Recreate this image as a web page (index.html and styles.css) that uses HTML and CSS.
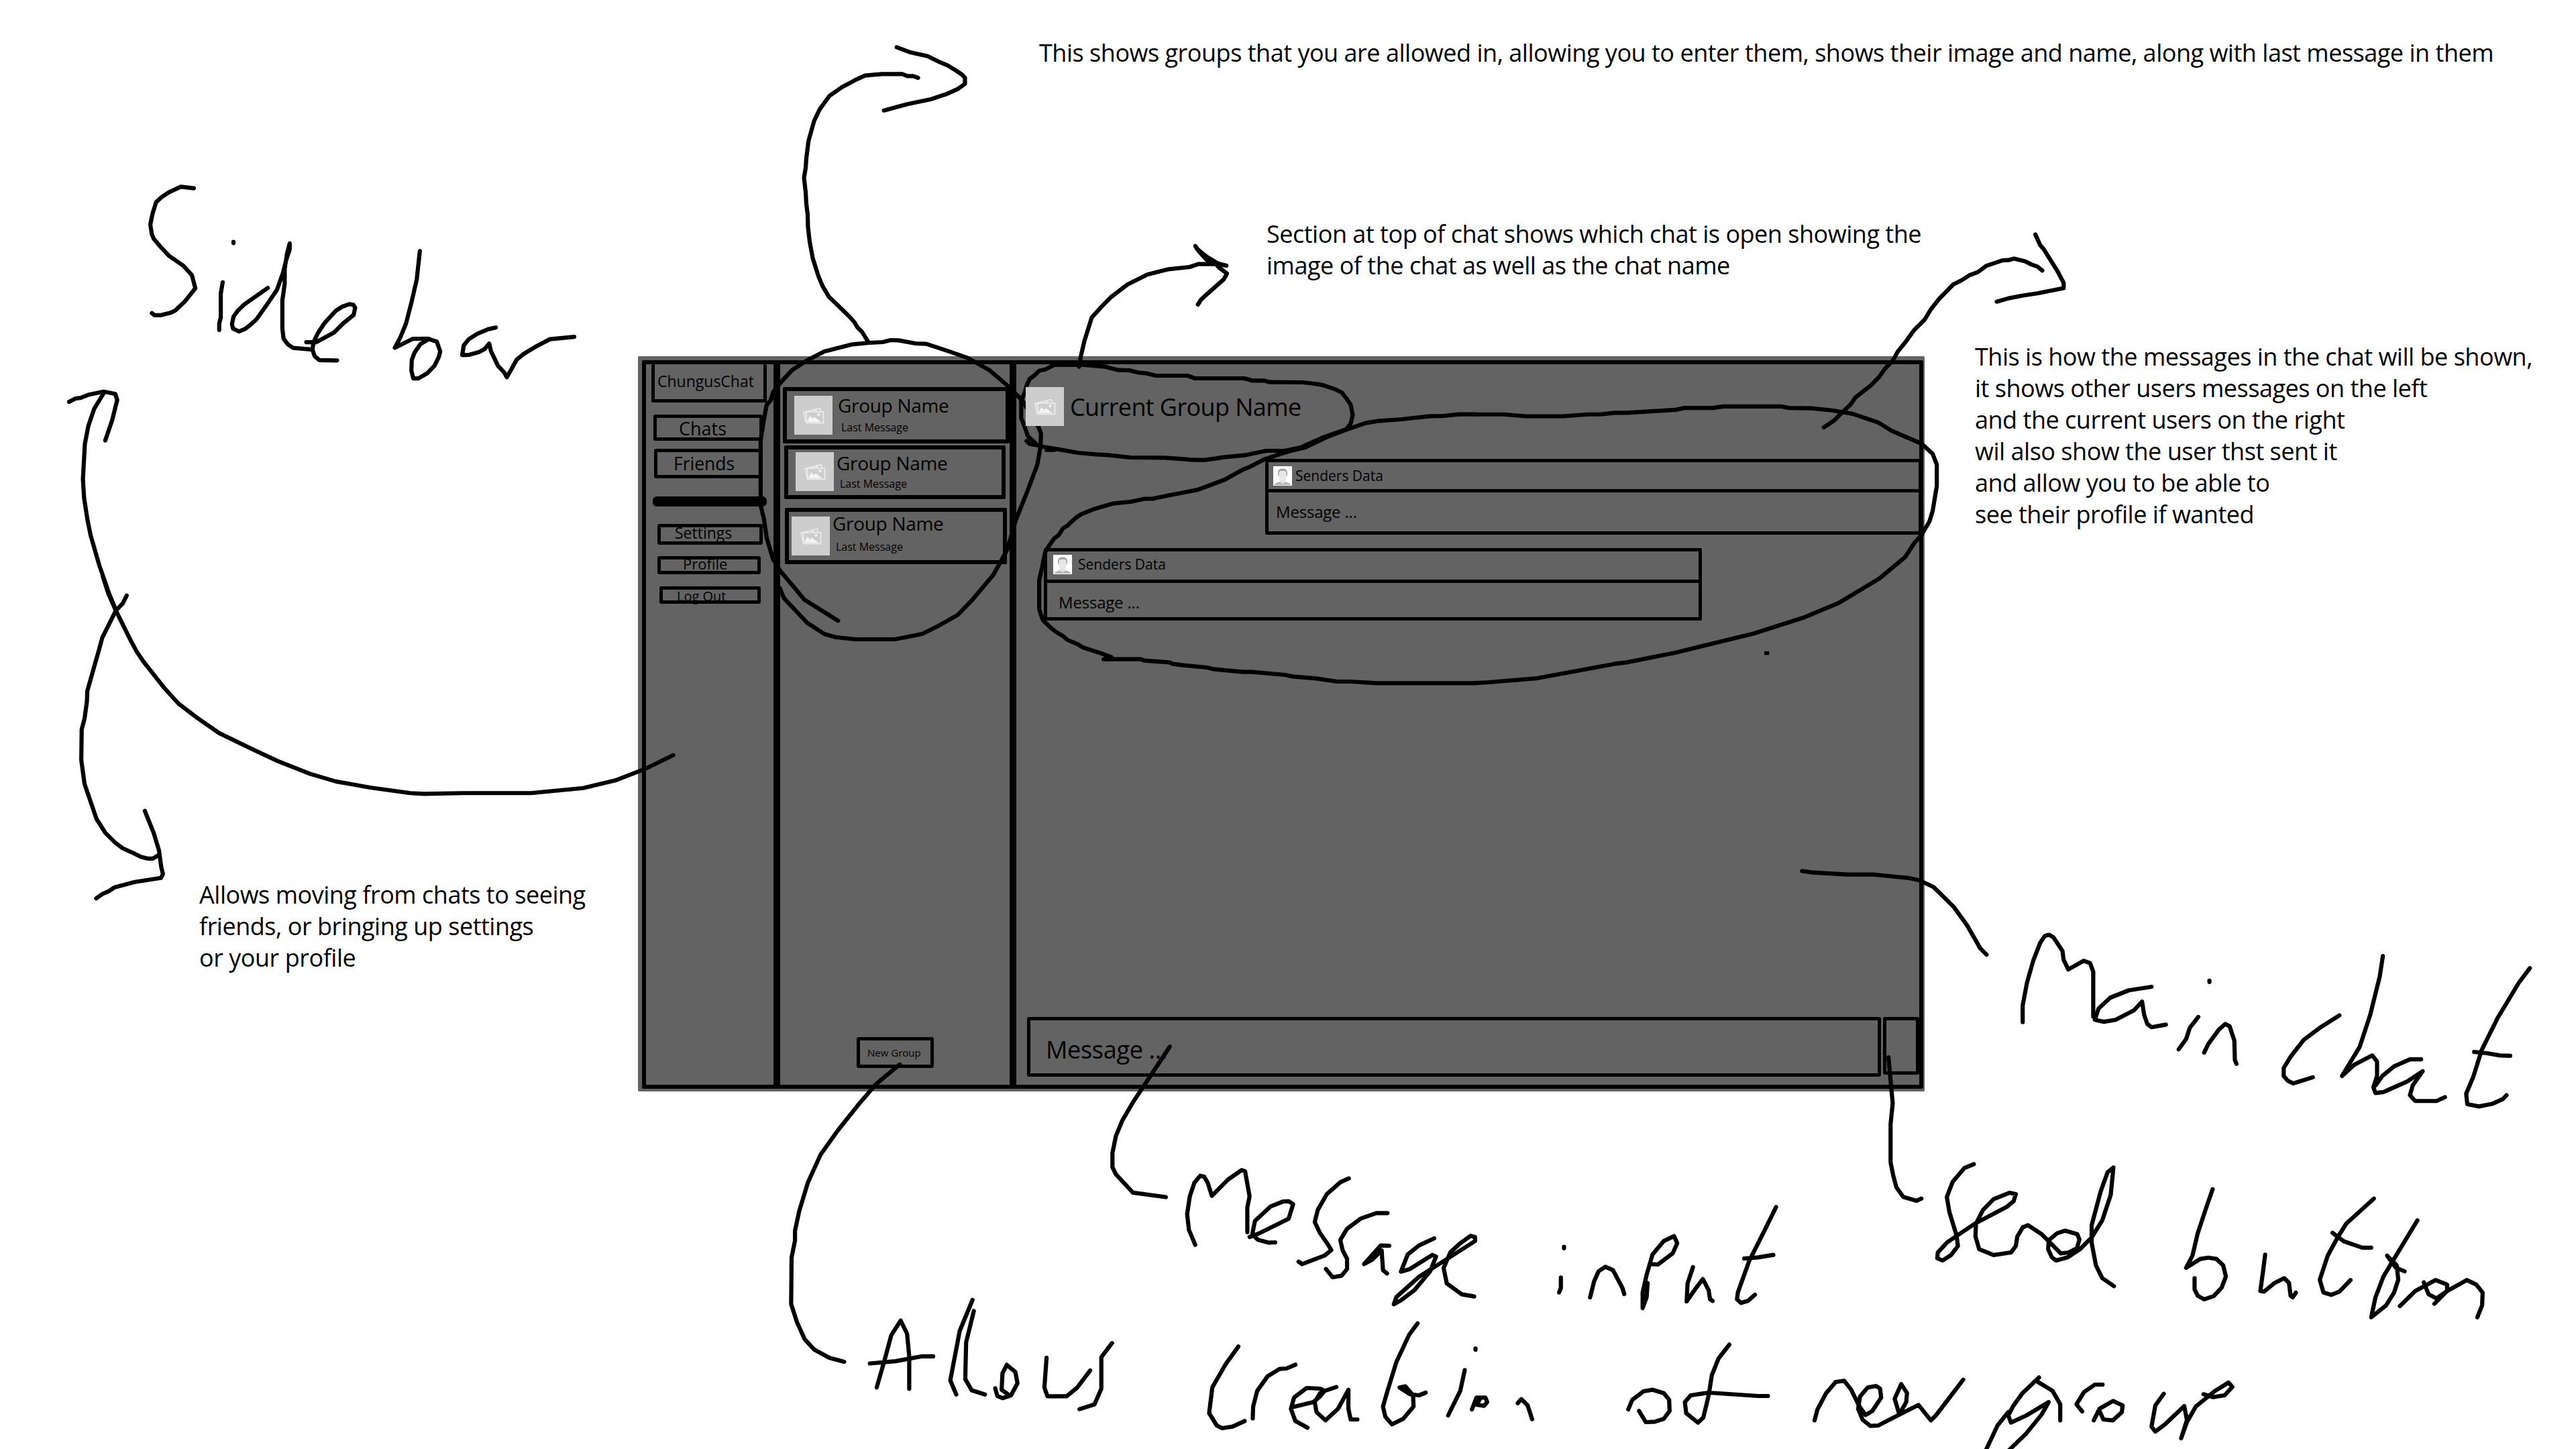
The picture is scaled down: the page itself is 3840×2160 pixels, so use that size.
FILE: index.html
```html
<!DOCTYPE html>
<html lang="en">
<head>
<meta charset="utf-8">
<title>ChungusChat wireframe</title>
<link rel="stylesheet" href="styles.css">
</head>
<body>
<svg class="defs" aria-hidden="true">
  <symbol id="photo" viewBox="0 0 57 58">
    <rect width="57" height="58" fill="#cdcdcd"/>
    <path d="M17.5 39.5 13.8 24.8 38 18.3 39.5 23M17 23.5l2 16" fill="none" stroke="#f0f0f0" stroke-width="1.4"/>
    <rect x="18" y="24" width="25.500" height="16.500" fill="#cdcdcd" stroke="#f0f0f0" stroke-width="1.500"/>
    <path d="M19.500 39v-2l4-7 4 4 2.500-2.500L40 39zM29 22.500l3.500-2.300 2 2.300z" fill="#f4f4f4"/>
    <circle cx="36.500" cy="28" r="2" fill="#f4f4f4"/>
  </symbol>
  <symbol id="person" viewBox="0 0 28 29">
    <rect width="28" height="29" fill="#fff"/>
    <path d="M1.500 28c1-3 5-3.500 8.500-5h8c3.500 1.500 7.500 2 8.500 5z" fill="#b5b5b5"/>
    <path d="M10 19h8v4.500q-4 5-8 0z" fill="#dedede"/>
    <path d="M7.200 14C6 7 8 3.500 14 3.500S21.800 7 20.800 14z" fill="#a2a2a2"/>
    <path d="M8.300 12q0-4 2-4.800 3.700-1 7.400 0 2 .8 2 4.800c0 6-2.200 11-5.700 11s-5.700-5-5.700-11z" fill="#e7e7e7"/>
  </symbol>
</svg>

<main class="board">
  <p class="note note-groups">This shows groups that you are allowed in, allowing you to enter them, shows their image and name, along with last message in them</p>
  <p class="note note-header">Section at top of chat shows which chat is open showing the<br>image of the chat as well as the chat name</p>
  <p class="note note-messages">This is how the messages in the chat will be shown,<br>it shows other users messages on the left<br>and the current users on the right<br>wil also show the user thst sent it<br>and allow you to be able to<br>see their profile if wanted</p>
  <p class="note note-sidebar">Allows moving from chats to seeing<br>friends, or bringing up settings<br>or your profile</p>

  <div class="window">
    <div class="app">
      <nav class="sidebar">
        <div class="box brand"><span>ChungusChat</span></div>
        <div class="box chats"><span>Chats</span></div>
        <div class="box friends"><span>Friends</span></div>
        <div class="rule"></div>
        <div class="box settings"><span>Settings</span></div>
        <div class="box profile"><span>Profile</span></div>
        <div class="box logout"><span>Log Out</span></div>
      </nav>
      <section class="groups">
        <article class="card card-a"><svg class="photo"><use href="#photo"/></svg><div class="info"><h3>Group Name</h3><p>Last Message</p></div></article>
        <article class="card card-b"><svg class="photo"><use href="#photo"/></svg><div class="info"><h3>Group Name</h3><p>Last Message</p></div></article>
        <article class="card card-c"><svg class="photo"><use href="#photo"/></svg><div class="info"><h3>Group Name</h3><p>Last Message</p></div></article>
        <div class="box new-group"><span>New Group</span></div>
      </section>
      <section class="chat">
        <header class="current"><svg class="photo"><use href="#photo"/></svg><h2>Current Group Name</h2></header>
        <article class="message mine">
          <div class="sender"><svg class="avatar"><use href="#person"/></svg><span>Senders Data</span></div>
          <p>Message ...</p>
        </article>
        <article class="message theirs">
          <div class="sender"><svg class="avatar"><use href="#person"/></svg><span>Senders Data</span></div>
          <p>Message ...</p>
        </article>
        <footer class="composer">
          <div class="box input"><span>Message ...</span></div>
          <div class="box send"></div>
        </footer>
      </section>
    </div>
  </div>

  <svg class="ink" viewBox="0 0 3840 2160">
    <g transform="translate(80 240) scale(.57398 .44643)">
      <path d="M364 91 330 86 300 104 280 121 266 138 257 175 251 212 255 245 260 260 280 290 300 317 337 350 359 381 368 425 340 470 316 499 305 506 277 515 262 515 255 508"/>
      <path d="M439 405 434 443 434 522 430 543 430 564M467 270v4"/>
      <path d="M556 424 494 480 478 500 467 520 463 545 466 560 481 569 497 561 513 545 527 528 553 481 580 430 596 372 604 330 613 295 613 275 606 310 600 360 600 410 594 465 594 560 597 593 608 612 622 624 668 629"/>
      <path d="M656 605 682 605 728 573 752 542 779 514 783 490 778 480 768 478 750 486 733 500 703 542 686 575 675 605 672 630 678 652 690 665 736 666"/>
      <path d="M951 301 943 395 930 468 915 543 900 590 886 624 932 594 970 593 995 603 1004 636 1000 655 989 684 970 709 947 726 934 726 929 700 930 665 937 640 952 612 975 594"/>
      <path d="M1148 556 1128 562 1100 577 1078 595 1065 616 1061 648 1080 647 1105 638 1119 628 1131 610 1136 636 1154 684 1170 706 1177 722 1188 697 1202 664 1221 644 1256 617 1289 595 1352 587"/>
      <path d="M40 804 57 793 70 791 92 780 130 770 160 778 165 798 152 865 134 933M130 775 105 828 90 885 81 945 76 1062 79 1125 88 1200 96 1250 119 1352 145 1448 162 1500"/>
    </g>
    <g transform="translate(90 860) scale(.59949 .39541)">
      <path d="M106 0 119 62 138 127 175 240 190 282 206 318 258 418 294 478 340 531 395 589 478 650 540 694 620 742 685 771 770 794 870 815 905 818 1000 815 1170 815 1300 796 1380 767 1452 725 1524 672"/>
      <path d="M165 70 155 100 138 127 104 230 96 275 80 360 67 430 66 470 60 535 53 575 52 690 60 780 90 913 112 965 135 1000 155 1023 180 1040 200 1055 218 1062 230 1062 243 1050"/>
      <path d="M210 882 232 965 245 1030 251 1095 255 1120 250 1135 185 1150 135 1170 120 1185 105 1195 89 1212"/>
    </g>
    <g transform="translate(1180 50) scale(.42092 .33333)">
      <path d="M448 198 430 190 410 190 392 181 320 181 260 188 230 205 178 240 134 279 100 338 80 390 60 480 52 560 50 600 44 645 50 710 52 760 57 810 58 865 64 930 75 1005 95 1085 110 1130 132 1177 200 1260 222 1290 232 1312 250 1335 262 1360 272 1380"/>
      <path d="M372 61 418 83 482 101 525 128 552 142 583 166 605 185 614 198 614 225 590 247 550 270 490 295 410 316 327 344"/>
      <path d="M1018 1490 1025 1440 1037 1375 1063 1270 1095 1225 1130 1180 1190 1122 1260 1078 1335 1054 1410 1044 1440 1031 1500 1031 1540 1038 1510 1028 1470 998 1435 962"/>
      <path d="M1430 950 1445 978 1470 1012 1500 1028 1515 1048 1542 1073 1530 1100 1460 1178 1450 1190 1439 1212"/>
    </g>
    <g transform="translate(940 500) scale(.40816 .33333)">
      <path d="M758 1276 635 1182 600 1130 548 1055 520 1000 497 905 487 820 475 760 475 470 485 390 497 310 512 290 520 255 545 215 590 155 640 115 707 72 810 40 870 33 920 30 950 21 980 22 1040 36 1080 38 1160 70 1230 100 1310 155 1380 228 1430 290 1490 410 1499 440 1497 500 1485 580 1445 710 1407 825 1375 960 1325 1070 1250 1180 1195 1250 1130 1295 1065 1335 965 1359 820 1359 750 1350 707 1335 645 1285 560 1175 545 1130"/>
    </g>
    <g transform="translate(1500 520) scale(.44643 .33333)">
      <path d="M68 412 78 425 100 430 130 440 185 452 240 465 300 472 340 475 415 486 530 487 630 497 665 497 730 484 800 475 868 456 930 456 985 440 1060 395 1135 360 1150 335 1157 295 1150 250 1135 220 1120 195 1100 182 1060 163 1030 156 990 150 880 149 860 142 820 142 795 132 630 132 605 120 500 120 470 110 440 106 410 96 375 95 330 80 260 72 160 72 130 92 110 98 95 118 78 135 68 165 62 195 50 230 50 310 62 350 72 390 100 425M135 452H160"/>
      <path d="M1568 1495H1235L1150 1488 1105 1488 1035 1474 960 1466 930 1458 820 1445 790 1445 690 1432 670 1425 590 1415 555 1409 545 1402 460 1394 450 1388 325 1388 352 1380 320 1363 255 1335 240 1322 205 1302 190 1285 165 1265 145 1243 122 1213 110 1165 110 1035 120 975 130 910 138 890 160 848 175 833 190 802 205 790 230 758 250 740 290 718 330 702 360 691 415 684 460 671 490 670 545 655 640 630 730 585 790 540 810 530 860 495 905 475 940 460 1000 440 1070 395 1135 362 1200 332 1240 323 1320 315 1415 301 1460 300 1510 293 1568 293"/>
    </g>
    <g transform="translate(2180 300) scale(.61224 .45918)">
      <path d="M33 692 100 692 155 698 245 698 305 692 335 692 370 687 400 687 520 677 540 671 610 671 635 666 775 666 795 671 850 672 900 679 950 690 1012 718 1045 745 1118 787 1145 820 1155 855 1155 925 1145 1005 1137 1040 1118 1083 1100 1110 1078 1155 1015 1225 915 1305 830 1352 710 1403 520 1465 400 1497 370 1502 180 1549 60 1562 33 1564"/>
      <path d="M880 734 905 712 925 685 945 660 957 637 995 597 1015 570 1028 545 1048 517 1060 488 1080 455 1100 418 1125 385 1140 352 1160 318 1195 270 1215 257 1235 240 1255 230 1275 210 1315 192 1330 191 1343 186 1370 195 1385 205 1400 212 1412 225"/>
      <path d="M1395 108 1407 143 1415 155 1448 225 1464 265 1464 282 1400 299 1365 306 1330 315 1301 326"/>
      <path d="M735 1461h12v12h-12z" class="speck"/>
    </g>
    <g transform="translate(2600 1250) scale(.79082 .47832)">
      <path d="M109 101 130 106 195 112 243 112 310 123 330 130 357 151 395 213 420 270 445 342 457 362"/>
      <path d="M525 572 525 520 533 450 545 380 558 325 567 303 575 300 583 308 600 350 602 377 611 408 640 381 652 388 658 415 658 555"/>
      <path d="M768 462 725 473 690 496 668 530 661 565 678 571 700 565 735 535 750 508 754 550 760 578 768 588 795 580"/>
      <path d="M856 556 840 590 833 625 819 657M877 443v4M867 667 875 640 895 595 907 578 915 585 924 630 925 690 928 702"/>
      <path d="M1122 551 1085 590 1055 627 1030 680 1017 715 1017 740 1025 755 1035 763 1072 744"/>
      <path d="M1204 366 1198 430 1180 550 1160 650 1127 740 1150 705 1184 676 1193 695 1193 740 1186 775 1190 793 1205 790 1250 757 1279 725 1260 770 1255 800 1265 818 1305 818 1321 806M1276 688 1255 688 1225 710 1203 740 1190 770"/>
      <path d="M1481 404 1460 450 1420 560 1390 660 1375 740 1361 795 1363 828 1385 835 1410 827 1430 812 1437 800M1376 665 1400 669 1425 676 1444 677"/>
      <path d="M272 682 276 755 280 825 276 890 276 1010 281 1050 287 1087 300 1117 325 1129 334 1122"/>
      <path d="M433 1015 415 1027 393 1070 382 1117 387 1165 400 1235 403 1270 390 1298 374 1315 364 1308 365 1290 383 1258 435 1200 495 1148 508 1130 512 1108 500 1104 470 1124 450 1158 437 1200 436 1240 443 1280 470 1298 503 1290 512 1270 515 1240 525 1212 535 1205 560 1232 597 1293 612 1290 627 1277 632 1250 628 1233 605 1222 590 1230 574 1252 573 1280 580 1305 588 1315 610 1305 633 1280 655 1243 675 1190 691 1110 696 1025 685 1040 672 1100 655 1205 655 1260 663 1330 675 1370 697 1395"/>
      <path d="M883 1093 870 1155 855 1230 845 1300 833 1338 860 1310 875 1306 890 1310 903 1330 908 1365 900 1400 885 1426 867 1436 855 1425 849 1405 849 1370"/>
      <path d="M982 1297 978 1350 973 1410 980 1412 1000 1385 1018 1370 1027 1385 1030 1425 1034 1430 1040 1415"/>
      <path d="M1187 1122 1135 1200 1118 1245 1100 1300 1085 1375 1092 1415 1107 1422 1122 1412 1143 1376M1109 1229 1130 1255 1165 1275 1182 1275"/>
      <path d="M1269 1190 1225 1310 1205 1365 1190 1430 1182 1492 1210 1455 1225 1415 1233 1375 1230 1330 1212 1300 1228 1337 1245 1349"/>
      <path d="M1236 1457 1265 1410 1303 1376 1325 1390 1325 1410 1305 1433 1290 1420 1281 1383M1301 1450 1325 1410 1362 1376 1380 1390 1392 1415 1391 1455 1382 1492"/>
    </g>
    <g transform="translate(1700 1720) scale(.66964 .33333)">
      <path d="M122 407 108 340 104 270 110 190 120 130 133 98 142 102 150 130 159 188 195 115 225 73 233 78 243 190 238 240 238 350"/>
      <path d="M243 372 265 355 330 290 340 225 330 212 318 213 290 235 255 300 249 360 262 385 285 397 300 396"/>
      <path d="M464 110 445 127 415 180 395 250 388 305 400 355 415 398 425 430 410 455 360 493 352 482"/>
      <path d="M550 265 525 265 490 290 460 335 445 385 450 430 460 470 460 515 448 545 428 552 413 515"/>
      <path d="M554 411 535 410 498 493 515 475 537 432 540 520 549 535"/>
      <path d="M654 378 620 410 595 450 580 527 600 515 650 452 658 460 645 525 610 610 580 655 564 673 570 640 620 550 745 390 745 372 735 367 712 400 690 440 675 510 682 580 715 628 743 638"/>
      <path d="M936 553 936 600 932 620M943 416v6M1001 642 1010 570 1020 525 1035 505 1052 520 1073 600 1077 627"/>
      <path d="M1129 578 1127 640 1118 690 1118 620 1127 540 1140 450 1165 390 1188 368 1195 400 1185 445 1152 495 1138 493"/>
      <path d="M1230 507 1218 580 1216 660 1235 605 1252 560 1265 610 1268 650 1274 658"/>
      <path d="M1415 238 1390 340 1355 480 1330 620 1328 650 1337 667 1352 658 1368 630M1344 468 1375 463 1409 452"/>
      <path d="M218 862 190 940 160 1045 153 1160 170 1215 182 1227 205 1220 232 1195"/>
      <path d="M250 1183 251 1130 260 1060 283 995 310 962 325 960 345 943"/>
      <path d="M338 1133 385 1110 400 1085 410 1060 436 1043M372 1225 345 1195 335 1140 342 1090 370 1047 400 1050 410 1060M400 1070 388 1110 392 1155 412 1192 440 1140 463 1055 463 1140 468 1188 483 1188"/>
      <path d="M617 758 598 810 570 930 550 1060 540 1130 545 1175 560 1210 585 1185 608 1130 607 1080 590 1040 577 1045 600 1075 620 1080 635 1068"/>
      <path d="M722 967 712 1060 685 1170M746 870v6M738 1143 748 1090 768 1090 772 1110 765 1127 748 1122 755 1100M840 1115 848 1097 862 1125 872 1187"/>
      <path d="M1086 1143 1095 1100 1120 1062 1140 1055 1165 1070 1177 1100 1178 1150 1165 1185 1145 1198 1125 1200 1110 1150"/>
      <path d="M1311 853 1287 915 1272 990 1265 1080 1253 1180 1241 1202 1215 1160 1212 1110 1225 1080 1265 1068 1375 1083 1397 1083"/>
    </g>
    <g transform="translate(1150 1500) scale(.63776 .42092)">
      <path d="M300 206 245 275 205 345 155 440 115 525 85 625 65 725 55 795 55 830 47 890 46 1055 60 1120 78 1180 100 1216 135 1245 170 1259"/>
      <path d="M931 143 880 260 845 340 820 405 805 460 797 520 797 570 805 595 845 660 922 676"/>
      <path d="M246 1350 265 1250 280 1165 302 1113 317 1160 322 1240 322 1355M230 1265 290 1257 350 1240 378 1240"/>
      <path d="M470 1040 440 1150 418 1325 432 1375M473 1079 455 1190 453 1320 468 1360 499 1375"/>
      <path d="M523 1353 528 1380 540 1388 560 1378 575 1335 570 1295 550 1270 540 1300 538 1358 552 1373"/>
      <path d="M643 1245 638 1350 645 1381 690 1381 715 1350 745 1290M796 1193 771 1243 771 1355 755 1410 720 1427"/>
    </g>
    <g transform="translate(2550 1980) scale(.57398 .33333)">
      <path d="M270 412 277 365 300 290 325 240 347 235 365 275 385 345 402 388 420 370 443 310 440 270 430 258 408 265 388 305 383 360 395 410 415 437 435 435 480 395 540 343 572 412 585 390 625 300 656 230M490 385 478 315 495 250 510 290 508 330 490 385"/>
      <path d="M853 220 810 290 785 350 773 390 780 422 820 390 878 330 860 385 820 470 775 545M773 375 745 435 715 545M850 240 888 280 908 340 908 412"/>
      <path d="M1018 252 998 252 970 285 950 340 965 372M995 412 1010 360 1045 325 1070 345 1068 375 1045 412 1020 408 1010 370"/>
      <path d="M1177 293 1155 345 1145 440 1155 462 1180 430 1230 348 1237 410 1222 492 1237 420 1260 350 1310 280 1345 243 1355 262 1335 300 1305 308 1280 295"/>
    </g>
  </svg>
</main>
</body>
</html>
```
FILE: styles.css
```css
* { box-sizing: border-box; }
body { margin: 0; background: #fff; color: #000; font-family: "Open Sans", "Noto Sans", sans-serif; }
h2, h3, p { margin: 0; font-weight: 400; }
.defs { position: absolute; width: 0; height: 0; }

/* Free canvas: the notes, the wireframe window and the pen strokes */
.board { position: relative; width: 3840px; height: 2160px; overflow: hidden; }
.note { position: absolute; font-size: 36px; line-height: 47px; letter-spacing: -0.48px; white-space: nowrap; }
.note-groups { left: 1549px; top: 55px; }
.note-header { left: 1888px; top: 325px; }
.note-messages { left: 2944px; top: 508px; }
.note-sidebar { left: 297px; top: 1310px; }
.ink { position: absolute; inset: 0; width: 3840px; height: 2160px; z-index: 1; }
.ink path { fill: none; stroke: #000; stroke-width: 6.2px; stroke-linecap: round; stroke-linejoin: round; vector-effect: non-scaling-stroke; }
.ink .speck { fill: #000; stroke: none; }

/* Window */
.window { position: absolute; left: 951px; top: 531px; width: 1918px; height: 1096px; padding: 6px 2px 4px 6px; background: #636363; border-radius: 2px; line-height: 1; white-space: nowrap; }
.app { display: grid; grid-template-columns: 200px 352px 1fr; height: 1086px; border: 6px solid #000; border-radius: 2px; }
.sidebar, .groups, .chat { display: flex; flex-direction: column; align-items: flex-start; min-width: 0; }
.sidebar, .groups { border-right: 10px solid #000; }
.box { display: flex; align-items: flex-start; border: 5px solid #000; border-radius: 3px; }
.box span { display: block; }

/* Sidebar */
.brand { width: 172px; height: 57px; margin-left: 8px; border-top: 0; font-size: 23px; }
.brand span { margin: 14px 0 0 4px; }
.chats { width: 163px; height: 39px; margin: 18px 0 0 11px; font-size: 27px; }
.chats span { margin: 2px 0 0 33px; }
.friends { width: 162px; height: 44px; margin: 12px 0 0 12px; font-size: 26.500px; }
.friends span { margin: 4px 0 0 24px; }
.rule { width: 170px; height: 15px; margin: 27px 0 0 10px; background: #000; border-radius: 6px; }
.settings { width: 157px; height: 31px; margin: 26px 0 0 17px; font-size: 23px; }
.settings span { margin: -3px 0 0 21px; }
.profile { width: 154px; height: 27px; margin: 17px 0 0 17px; font-size: 22px; }
.profile span { margin: -5px 0 0 33px; }
.logout { width: 151px; height: 26px; margin: 18px 0 0 20px; font-size: 20px; }
.logout span { margin: 0 0 0 21px; }

/* Group list */
.card { display: flex; align-items: flex-start; border: 6px solid #000; border-radius: 2px; }
.photo { position: relative; z-index: 2; flex: none; width: 57px; height: 58px; }
.card h3 { font-size: 28px; letter-spacing: -0.3px; line-height: 28px; }
.card p { font-size: 16px; line-height: 16px; padding-left: 5px; }
.card-a { width: 338px; height: 84px; margin: 34px 0 0 4px; }
.card-a .photo { margin: 7px 0 0 11px; }
.card-a .info { margin: 7px 0 0 8px; }
.card-a p { margin-top: 11px; }
.card-b { width: 330px; height: 80px; margin: 3px 0 0 6px; }
.card-b .photo { margin: 4px 0 0 11px; }
.card-b .info { margin: 6px 0 0 4px; }
.card-b p { margin-top: 9px; }
.card-c { width: 331px; height: 84px; margin: 13px 0 0 7px; }
.card-c .photo { margin: 7px 0 0 4px; }
.card-c .info { margin: 3px 0 0 4px; }
.card-c p { margin-top: 13px; }
.new-group { width: 115px; height: 46px; margin: auto 0 25px 114px; font-size: 15px; }
.new-group span { margin: 11px 0 0 11px; }

/* Open chat */
.current { display: flex; margin: 34px 0 0 14px; }
.current h2 { margin: 12px 0 0 9px; font-size: 36px; line-height: 36px; letter-spacing: -0.6px; }
.message { border: 5px solid #000; border-radius: 2px; }
.sender { display: flex; border-bottom: 5px solid #000; font-size: 21px; }
.avatar { width: 28px; height: 29px; }
.message p { font-size: 24px; letter-spacing: -0.2px; }
.mine { width: 979px; height: 113px; margin: 49px 0 0 371px; }
.mine .sender { height: 45px; }
.mine .avatar { margin: 6px 0 0 7px; }
.mine .sender span { margin: 10px 0 0 5px; }
.mine p { margin: 17px 0 0 11px; }
.theirs { width: 981px; height: 108px; margin: 20px 0 0 41px; }
.theirs .sender { height: 47px; }
.theirs .avatar { margin: 5px 0 0 9px; }
.theirs .sender span { margin: 9px 0 0 9px; }
.theirs p { margin: 17px 0 0 17px; }
.composer { display: flex; gap: 3px; margin: auto 0 12px 16px; }
.input { width: 1273px; height: 89px; font-size: 36px; letter-spacing: -0.300px; }
.input span { margin: 26px 0 0 23px; }
.send { width: 54px; height: 86px; }
```
